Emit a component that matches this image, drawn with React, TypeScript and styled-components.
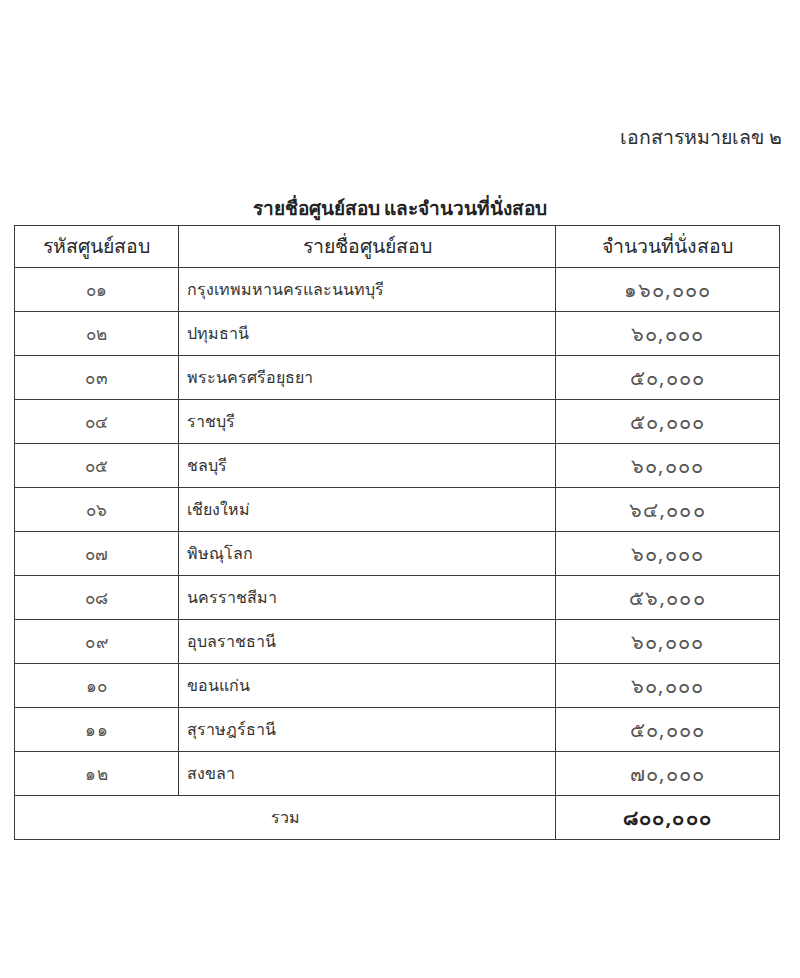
import React from 'react'
import styled, { createGlobalStyle } from 'styled-components'

const GlobalStyle = createGlobalStyle`
  html, body {
    margin: 0;
    padding: 0;
    background: #ffffff;
  }
  body {
    font-family: 'Noto Sans', 'DejaVu Sans', sans-serif;
    color: #222;
  }
`

const Page = styled.div`
  width: 800px;
  height: 978px;
  box-sizing: border-box;
  padding: 122px 14px 0 14px;
  display: flex;
  flex-direction: column;
`

const DocNumber = styled.div`
  align-self: flex-end;
  margin-right: 4px;
  font-size: 19.5px;
  line-height: 30px;
  color: #2e2e2e;
`

const Title = styled.h1`
  margin: 41px 0 2px 0;
  text-align: center;
  font-size: 19px;
  line-height: 30px;
  font-weight: 700;
  color: #222;
`

const Table = styled.table`
  width: 765px;
  border-collapse: collapse;
  table-layout: fixed;
  border: 1.5px solid #3a3a3a;
`

const Th = styled.th`
  height: 41px;
  border: 1.5px solid #3a3a3a;
  font-weight: 400;
  font-size: 19.5px;
  color: #2a2a2a;
  text-align: center;
  padding: 0;
`

const Td = styled.td<{ $align?: 'left' | 'center' }>`
  height: 43px;
  border: 1.5px solid #3a3a3a;
  font-size: 16px;
  color: #333;
  text-align: ${(p) => p.$align || 'center'};
  padding: ${(p) => (p.$align === 'left' ? '0 8px' : '0')};
`

const Code = styled.span`
  font-size: 17px;
  letter-spacing: 0.5px;
  color: #555;
`

const Seats = styled.span<{ $bold?: boolean }>`
  font-size: 20px;
  font-weight: ${(p) => (p.$bold ? 700 : 400)};
  letter-spacing: 1.2px;
  color: ${(p) => (p.$bold ? '#222' : '#555')};
`

const rows: [string, string, string][] = [
  ['๐๑', 'กรุงเทพมหานครและนนทบุรี', '๑๖๐,๐๐๐'],
  ['๐๒', 'ปทุมธานี', '๖๐,๐๐๐'],
  ['๐๓', 'พระนครศรีอยุธยา', '๕๐,๐๐๐'],
  ['๐๔', 'ราชบุรี', '๕๐,๐๐๐'],
  ['๐๕', 'ชลบุรี', '๖๐,๐๐๐'],
  ['๐๖', 'เชียงใหม่', '๖๔,๐๐๐'],
  ['๐๗', 'พิษณุโลก', '๖๐,๐๐๐'],
  ['๐๘', 'นครราชสีมา', '๕๖,๐๐๐'],
  ['๐๙', 'อุบลราชธานี', '๖๐,๐๐๐'],
  ['๑๐', 'ขอนแก่น', '๖๐,๐๐๐'],
  ['๑๑', 'สุราษฎร์ธานี', '๕๐,๐๐๐'],
  ['๑๒', 'สงขลา', '๗๐,๐๐๐'],
]

const App = () => {
  return (
    <>
      <GlobalStyle />
      <Page>
        <DocNumber>เอกสารหมายเลข ๒</DocNumber>
        <Title>รายชื่อศูนย์สอบ และจำนวนที่นั่งสอบ</Title>
        <Table>
          <colgroup>
            <col style={{ width: 164 }} />
            <col style={{ width: 377 }} />
            <col style={{ width: 224 }} />
          </colgroup>
          <thead>
            <tr>
              <Th>รหัสศูนย์สอบ</Th>
              <Th>รายชื่อศูนย์สอบ</Th>
              <Th>จำนวนที่นั่งสอบ</Th>
            </tr>
          </thead>
          <tbody>
            {rows.map(([code, name, seats]) => (
              <tr key={code}>
                <Td>
                  <Code>{code}</Code>
                </Td>
                <Td $align="left">{name}</Td>
                <Td>
                  <Seats>{seats}</Seats>
                </Td>
              </tr>
            ))}
            <tr>
              <Td colSpan={2}>รวม</Td>
              <Td>
                <Seats $bold>๘๐๐,๐๐๐</Seats>
              </Td>
            </tr>
          </tbody>
        </Table>
      </Page>
    </>
  )
}

export default App
